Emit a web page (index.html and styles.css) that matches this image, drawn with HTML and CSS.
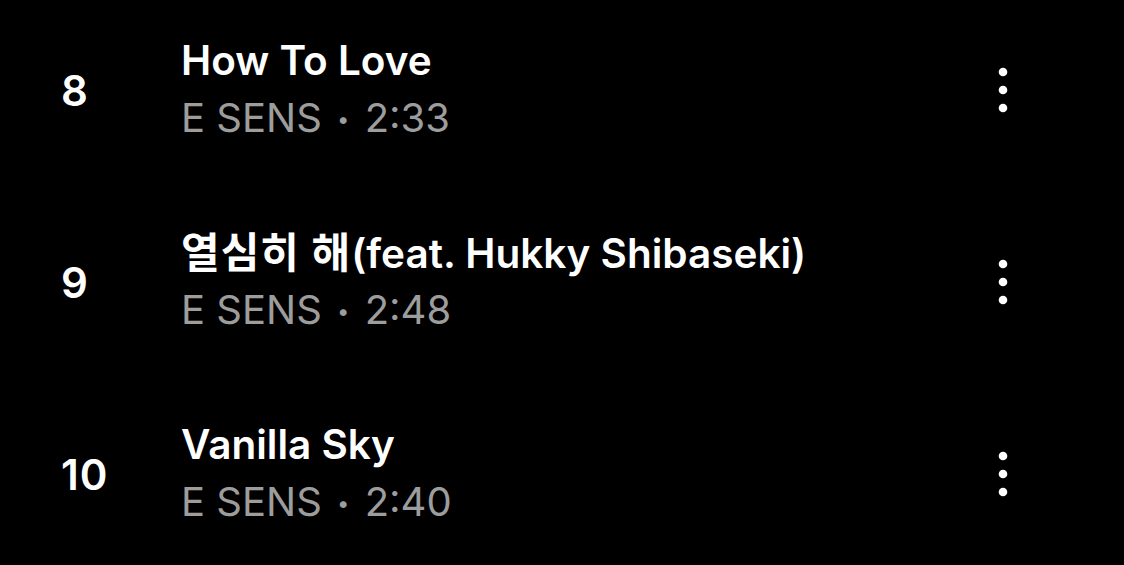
FILE: index.html
```html
<!DOCTYPE html>
<html lang="ko">
<head>
    <meta charset="UTF-8">
    <meta name="viewport" content="width=device-width, initial-scale=1.0">
    <title>Tracks</title>
    <link rel="stylesheet" href="styles.css">
</head>
<body>
    <div class="track-list">
        <div class="track">
            <div class="track-num">8</div>
            <div class="track-info">
                <div class="track-title">How To Love</div>
                <div class="track-meta">E SENS <span class="sep">•</span> 2:33</div>
            </div>
            <button class="more" aria-label="More">
                <svg width="10" height="46" viewBox="0 0 10 46"><circle cx="5" cy="5" r="4.3" fill="#fff"/><circle cx="5" cy="23" r="4.3" fill="#fff"/><circle cx="5" cy="41" r="4.3" fill="#fff"/></svg>
            </button>
        </div>
        <div class="track">
            <div class="track-num">9</div>
            <div class="track-info">
                <div class="track-title"><span class="ko">열심히 해</span>(feat. Hukky Shibaseki)</div>
                <div class="track-meta">E SENS <span class="sep">•</span> 2:48</div>
            </div>
            <button class="more" aria-label="More">
                <svg width="10" height="46" viewBox="0 0 10 46"><circle cx="5" cy="5" r="4.3" fill="#fff"/><circle cx="5" cy="23" r="4.3" fill="#fff"/><circle cx="5" cy="41" r="4.3" fill="#fff"/></svg>
            </button>
        </div>
        <div class="track">
            <div class="track-num">10</div>
            <div class="track-info">
                <div class="track-title">Vanilla Sky</div>
                <div class="track-meta">E SENS <span class="sep">•</span> 2:40</div>
            </div>
            <button class="more" aria-label="More">
                <svg width="10" height="46" viewBox="0 0 10 46"><circle cx="5" cy="5" r="4.3" fill="#fff"/><circle cx="5" cy="23" r="4.3" fill="#fff"/><circle cx="5" cy="41" r="4.3" fill="#fff"/></svg>
            </button>
        </div>
    </div>
</body>
</html>
```

FILE: styles.css
```css
body {
    margin: 0;
    background: #000;
    color: #fff;
    font-family: Inter, "Noto Sans CJK KR", sans-serif;
}
.track-list {
    display: flex;
    flex-direction: column;
    gap: 78px;
    padding: 33px 0 0 61px;
}
.track {
    display: flex;
    align-items: center;
    height: 114px;
    padding-right: 116px;
}
.track-num {
    width: 120px;
    font-size: 42px;
    font-weight: 600;
    letter-spacing: 1px;
}
.track-info {
    flex: 1;
}
.track-title {
    font-size: 40.5px;
    font-weight: 600;
    line-height: 57px;
    height: 57px;
}
.track-title .ko {
    font-size: 42px;
    letter-spacing: 1px;
}
.track-meta {
    font-size: 40px;
    line-height: 57px;
    color: #9d9d9d;
}
.sep {
    font-size: 22px;
    vertical-align: 5px;
    margin: 0 4px;
}
.more {
    background: none;
    border: none;
    padding: 0;
    display: flex;
}
```
